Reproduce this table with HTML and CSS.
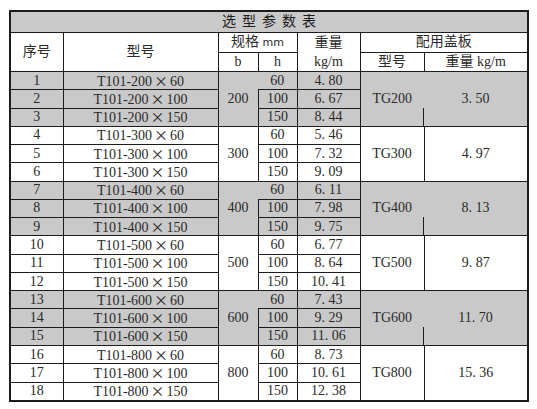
FILE: index.html
```html
<!DOCTYPE html>
<html lang="zh-CN">
<head>
    <meta charset="UTF-8">
    <meta name="viewport" content="width=device-width, initial-scale=1.0">
    <title>选型参数表</title>
    <link rel="stylesheet" href="styles.css">
</head>

<body>
    <div class="page">
        <table class="spec">
            <colgroup>
                <col class="c-no">
                <col class="c-model">
                <col class="c-b">
                <col class="c-h">
                <col class="c-weight">
                <col class="c-cover">
                <col class="c-cover-weight">
            </colgroup>
            <tr class="title">
                <th colspan="7">选型参数表</th>
            </tr>
            <tr class="head">
                <th rowspan="2">序号</th>
                <th rowspan="2">型号</th>
                <th colspan="2">规格 <span class="unit">mm</span></th>
                <th rowspan="2" class="two-line">重量<br>kg/m</th>
                <th colspan="2">配用盖板</th>
            </tr>
            <tr class="head">
                <th>b</th>
                <th>h</th>
                <th>型号</th>
                <th>重量 kg/m</th>
            </tr>

            <!-- 200 -->
            <tr class="shade">
                <td>1</td><td>T101-200<span class="x">×</span>60</td>
                <td rowspan="3" class="b">200</td><td class="h open">60</td><td>4. 80</td>
                <td rowspan="3" class="tg">TG200</td><td rowspan="3" class="cw">3. 50</td>
            </tr>
            <tr class="shade">
                <td>2</td><td>T101-200<span class="x">×</span>100</td>
                <td class="h">100</td><td>6. 67</td>
            </tr>
            <tr class="shade">
                <td>3</td><td>T101-200<span class="x">×</span>150</td>
                <td class="h">150</td><td>8. 44</td>
            </tr>

            <!-- 300 -->
            <tr>
                <td>4</td><td>T101-300<span class="x">×</span>60</td>
                <td rowspan="3">300</td><td>60</td><td>5. 46</td>
                <td rowspan="3">TG300</td><td rowspan="3">4. 97</td>
            </tr>
            <tr>
                <td>5</td><td>T101-300<span class="x">×</span>100</td>
                <td>100</td><td>7. 32</td>
            </tr>
            <tr>
                <td>6</td><td>T101-300<span class="x">×</span>150</td>
                <td>150</td><td>9. 09</td>
            </tr>

            <!-- 400 -->
            <tr class="shade">
                <td>7</td><td>T101-400<span class="x">×</span>60</td>
                <td rowspan="3" class="b">400</td><td class="h open">60</td><td>6. 11</td>
                <td rowspan="3" class="tg">TG400</td><td rowspan="3" class="cw">8. 13</td>
            </tr>
            <tr class="shade">
                <td>8</td><td>T101-400<span class="x">×</span>100</td>
                <td class="h">100</td><td>7. 98</td>
            </tr>
            <tr class="shade">
                <td>9</td><td>T101-400<span class="x">×</span>150</td>
                <td class="h">150</td><td>9. 75</td>
            </tr>

            <!-- 500 -->
            <tr>
                <td>10</td><td>T101-500<span class="x">×</span>60</td>
                <td rowspan="3">500</td><td>60</td><td>6. 77</td>
                <td rowspan="3">TG500</td><td rowspan="3">9. 87</td>
            </tr>
            <tr>
                <td>11</td><td>T101-500<span class="x">×</span>100</td>
                <td>100</td><td>8. 64</td>
            </tr>
            <tr>
                <td>12</td><td>T101-500<span class="x">×</span>150</td>
                <td>150</td><td>10. 41</td>
            </tr>

            <!-- 600 -->
            <tr class="shade">
                <td>13</td><td>T101-600<span class="x">×</span>60</td>
                <td rowspan="3" class="b">600</td><td class="h open">60</td><td>7. 43</td>
                <td rowspan="3" class="tg">TG600</td><td rowspan="3" class="cw">11. 70</td>
            </tr>
            <tr class="shade">
                <td>14</td><td>T101-600<span class="x">×</span>100</td>
                <td class="h">100</td><td>9. 29</td>
            </tr>
            <tr class="shade">
                <td>15</td><td>T101-600<span class="x">×</span>150</td>
                <td class="h">150</td><td>11. 06</td>
            </tr>

            <!-- 800 -->
            <tr>
                <td>16</td><td>T101-800<span class="x">×</span>60</td>
                <td rowspan="3">800</td><td>60</td><td>8. 73</td>
                <td rowspan="3">TG800</td><td rowspan="3">15. 36</td>
            </tr>
            <tr>
                <td>17</td><td>T101-800<span class="x">×</span>100</td>
                <td>100</td><td>10. 61</td>
            </tr>
            <tr>
                <td>18</td><td>T101-800<span class="x">×</span>150</td>
                <td>150</td><td>12. 38</td>
            </tr>
        </table>
    </div>
</body>
</html>
```

FILE: styles.css
```css
body {
    margin: 0;
    padding: 0;
    background-color: #ffffff;
    font-family: "Liberation Serif", "Noto Sans CJK SC", serif;
}

.page {
    padding: 10px 0 0 9px;
}

.spec {
    border-collapse: collapse;
    table-layout: fixed;
    border: 2px solid #1c1c1c;
    font-size: 14px;
    color: #2a2a2a;
}

.c-no { width: 53px; }
.c-model { width: 155px; }
.c-b { width: 40px; }
.c-h { width: 39px; }
.c-weight { width: 63px; }
.c-cover { width: 64px; }
.c-cover-weight { width: 104px; }

.spec th,
.spec td {
    border: 1px solid #1c1c1c;
    padding: 0;
    text-align: center;
    vertical-align: middle;
    font-weight: normal;
    line-height: 14px;
    height: 17.28px;
    white-space: nowrap;
}

.title th {
    background-color: #c9c9c9;
    height: 20px;
    font-size: 14px;
    letter-spacing: 6px;
    padding-left: 6px; /* компенсирует хвостовой letter-spacing */
    color: #1c1c1c;
}

.head th {
    height: 17.5px;
}

.head .two-line {
    line-height: 19px;
}

.unit {
    font-family: "DejaVu Sans", sans-serif;
    font-size: 11px;
}

.x {
    font-family: "Noto Sans CJK SC", sans-serif;
    line-height: 1;
    margin: 0 2px;
}

.shade td {
    background-color: #c9c9c9;
}

/* в серых группах часть внутренних линий не пропечатана */
.shade .b {
    border-right: none;
}

.shade .h.open {
    border-left: none;
}

.shade .tg {
    border-right: none;
}

.shade .cw {
    border-left: none;
    position: relative;
}

.shade .cw::after {
    content: "";
    position: absolute;
    left: -1px;
    bottom: 0;
    height: 18px;
    border-left: 1px solid #1c1c1c;
}
```
